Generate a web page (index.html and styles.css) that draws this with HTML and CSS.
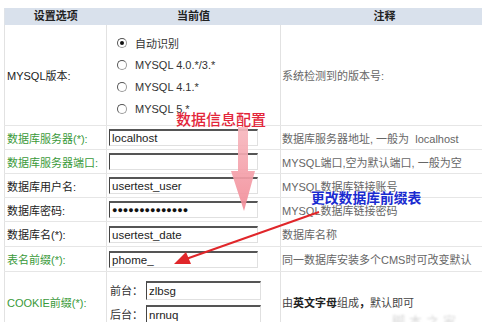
FILE: index.html
```html
<!DOCTYPE html>
<html lang="zh-CN">
<head>
<meta charset="utf-8">
<title>数据库配置</title>
<link rel="stylesheet" href="styles.css">
</head>
<body>
<div class="page">
  <table class="cfg">
    <colgroup><col class="c1"><col class="c2"><col class="c3"></colgroup>
    <thead>
      <tr class="head"><th>设置选项</th><th>当前值</th><th>注释</th></tr>
    </thead>
    <tbody>
      <tr class="r-ver">
        <td class="lbl">MYSQL版本:</td>
        <td class="val">
          <div class="radios">
            <label class="opt"><span class="radio on"></span>自动识别</label>
            <label class="opt"><span class="radio"></span><span class="en">MYSQL 4.0.*/3.*</span></label>
            <label class="opt"><span class="radio"></span><span class="en">MYSQL 4.1.*</span></label>
            <label class="opt"><span class="radio"></span><span class="en">MYSQL 5.*</span></label>
          </div>
        </td>
        <td class="note">系统检测到的版本号:</td>
      </tr>
      <tr class="r"><td class="lbl green">数据库服务器(*):</td><td class="val"><input class="box" value="localhost"></td><td class="note">数据库服务器地址, 一般为&nbsp; localhost</td></tr>
      <tr class="r"><td class="lbl green">数据库服务器端口:</td><td class="val"><input class="box" value=""></td><td class="note">MYSQL端口,空为默认端口, 一般为空</td></tr>
      <tr class="r"><td class="lbl">数据库用户名:</td><td class="val"><input class="box" value="usertest_user"></td><td class="note">MYSQL数据库链接账号</td></tr>
      <tr class="r"><td class="lbl">数据库密码:</td><td class="val"><input class="box pw" value="●●●●●●●●●●●●●●"></td><td class="note">MYSQL数据库链接密码</td></tr>
      <tr class="r r25"><td class="lbl">数据库名(*):</td><td class="val"><input class="box" value="usertest_date"></td><td class="note">数据库名称</td></tr>
      <tr class="r r25"><td class="lbl green">表名前缀(*):</td><td class="val"><input class="box" value="phome_"></td><td class="note">同一数据库安装多个CMS时可改变默认</td></tr>
      <tr class="r-cookie">
        <td class="lbl green">COOKIE前缀(*):</td>
        <td class="val">
          <div class="pair"><span class="pl">前台：</span><input class="box sm" value="zlbsg"></div>
          <div class="pair"><span class="pl">后台：</span><input class="box sm" value="nrnuq"></div>
        </td>
        <td class="note dark">由<b>英文字母</b>组成<b>，</b>默认即可</td>
      </tr>
    </tbody>
  </table>

  <div class="tag-red">数据信息配置</div>
  <svg class="pink-arrow" width="482" height="322" viewBox="0 0 482 322">
    <defs>
      <linearGradient id="pg" x1="0" y1="0" x2="0" y2="1">
        <stop offset="0" stop-color="#f7b8bf"/>
        <stop offset="1" stop-color="#f28c98"/>
      </linearGradient>
    </defs>
    <path d="M238 127 H248 V171 H255 L244 211 L231 171 H238 Z" fill="url(#pg)" opacity="0.92"/>
  </svg>
  <div class="tag-blue">更改数据库前缀表</div>
  <svg class="red-arrow" width="482" height="322" viewBox="0 0 482 322">
    <line x1="319" y1="212" x2="186" y2="259" stroke="#e0262a" stroke-width="2"/>
    <path d="M174 264 L186 252 L191 264 Z" fill="#e0262a"/>
  </svg>
  <div class="wm">脚本之家</div>
</div>
</body>
</html>
```
FILE: styles.css
```css
html, body {
  margin: 0;
  padding: 0;
  background: #fff;
}
body {
  font-family: "Liberation Sans", "Noto Sans CJK SC", sans-serif;
  font-size: 11px;
  color: #222;
  overflow: hidden;
}
.page {
  position: relative;
  width: 482px;
  height: 322px;
  overflow: hidden;
  padding-top: 8px;
  padding-left: 4px;
  box-sizing: border-box;
}
.cfg {
  border-collapse: collapse;
  table-layout: fixed;
  width: 484px;
  border-left: 1px solid #dfe3e8;
}
.c1 { width: 102px; }
.c2 { width: 174px; }
.c3 { width: 208px; }
.head th {
  height: 17px;
  padding: 0;
  background: #d9e1ec;
  font-weight: bold;
  font-size: 11px;
  color: #222;
  text-align: center;
  line-height: 17px;
}
td {
  padding: 0;
  border-bottom: 1px solid #e6e6e6;
  border-left: 1px solid #e2e2e2;
  vertical-align: middle;
}
.lbl {
  padding-left: 2px;
  color: #222;
  white-space: nowrap;
}
.green { color: #3a9a3a; }
.note {
  padding-left: 1px;
  color: #666;
  white-space: nowrap;
}
.note.dark { color: #444; }
.note b { color: #222; }
.r-ver td { height: 100px; }
.r td { height: 23px; }
.r25 td { height: 24px; }
.r-cookie td { height: 52px; vertical-align: top; }
.r-cookie .lbl, .r-cookie .note { vertical-align: middle; padding-top: 4px; }
.radios {
  display: flex;
  flex-direction: column;
  gap: 8px;
  padding-left: 8px;
  padding-top: 1px;
}
.opt {
  display: flex;
  align-items: center;
  gap: 8px;
  height: 14px;
  color: #333;
}
.en { font-size: 11px; }
.radio {
  width: 8px;
  height: 8px;
  border-radius: 50%;
  border: 1px solid #9a9a9a;
  border-top-color: #555;
  border-left-color: #555;
  background: #fff;
  display: inline-flex;
  align-items: center;
  justify-content: center;
}
.radio.on::after {
  content: "";
  width: 4px;
  height: 4px;
  border-radius: 50%;
  background: #111;
}
.val { padding-left: 2px; }
.box {
  display: block;
  box-sizing: border-box;
  width: 149px;
  height: 17px;
  margin: 0;
  padding: 0 2px;
  font-family: "Liberation Sans", sans-serif;
  font-size: 11.5px;
  color: #222;
  background: #fff;
  border: 1px solid #e0e0e0;
  border-top: 2px solid #555;
  border-left: 1px solid #444;
  outline: none;
}
.box.pw {
  font-size: 9px;
  letter-spacing: 0;
  color: #111;
}
.pair {
  display: flex;
  align-items: center;
  height: 24px;
  padding-left: 1px;
}
.r-cookie .pair:first-child { margin-top: 6px; }
.pl {
  width: 36px;
  color: #333;
}
.box.sm { width: 115px; height: 19px; }
.tag-red {
  position: absolute;
  left: 176px;
  top: 110px;
  font-family: "Noto Sans CJK SC", sans-serif;
  font-size: 15px;
  font-weight: 500;
  line-height: 18px;
  color: #e3263a;
}
.pink-arrow, .red-arrow {
  position: absolute;
  left: 0;
  top: 0;
  pointer-events: none;
}
.tag-blue {
  position: absolute;
  left: 311px;
  top: 189px;
  font-family: "Noto Sans CJK SC", sans-serif;
  font-size: 13.8px;
  font-weight: bold;
  line-height: 17px;
  color: #1a2bd0;
  text-shadow: 0 0 2px #fff, 0 0 2px #fff;
}
.wm {
  position: absolute;
  left: 392px;
  top: 311px;
  font-family: "Noto Sans CJK SC", sans-serif;
  font-size: 13px;
  letter-spacing: 4px;
  color: #d6d6d6;
  filter: blur(1px);
}
```
